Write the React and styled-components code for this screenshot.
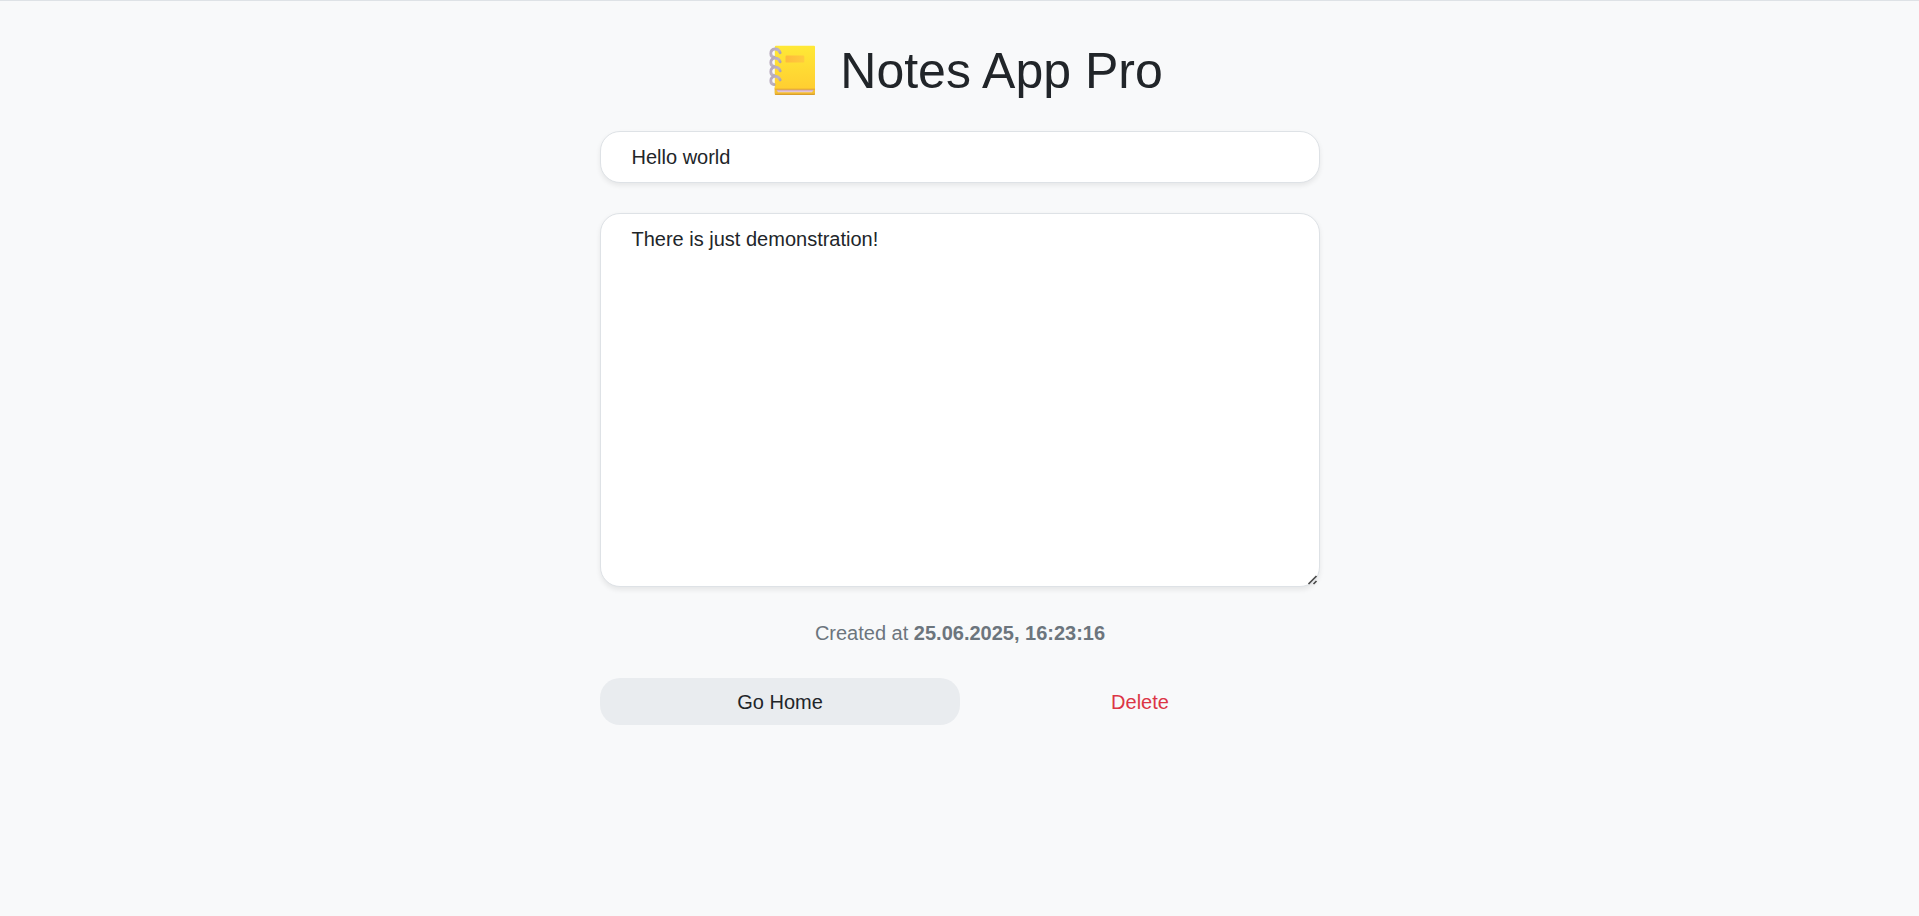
import React from 'react';
import styled, { createGlobalStyle } from 'styled-components';

const Global = createGlobalStyle`
  *, *::before, *::after { box-sizing: border-box; }
  body {
    margin: 0;
    background: #f8f9fa;
    color: #212529;
    font-family: "Liberation Sans", Arial, sans-serif;
    font-size: 20px;
    line-height: 1.5;
  }
`;
const Page = styled.main`
  border-top: 1px solid #dee2e6;
  display: flex;
  flex-direction: column;
  align-items: center;
  padding-top: 30px;
`;
const Heading = styled.header`
  display: flex;
  align-items: center;
  gap: 19px;
  height: 80px;
  padding-right: 3px;
`;
const NotebookSvg = styled.svg`
  display: block;
  width: 68px;
  height: 68px;
`;
const Title = styled.h1`
  margin: 0;
  font-size: 50px;
  font-weight: 400;
  line-height: 60px;
`;
const Column = styled.div`
  width: 720px;
  display: flex;
  flex-direction: column;
  padding-top: 20px;
`;
const Field = styled.input`
  display: block;
  width: 100%;
  height: 52px;
  padding: 10px 30px 10px 31px;
  border: 1px solid #dee2e6;
  border-radius: 20px;
  background: #fff;
  color: inherit;
  font: inherit;
  outline: 0;
  box-shadow: 0 2.5px 5px rgba(0, 0, 0, 0.075);
`;
const BodyWrap = styled.div`
  position: relative;
  margin-top: 30px;
`;
const Body = styled(Field)`
  height: 374px;
  resize: none;
`;
const Grip = styled.svg`
  position: absolute;
  right: 2px;
  bottom: 1px;
  width: 11px;
  height: 11px;
`;
const Created = styled.p`
  margin: 31px 0 30px;
  padding-left: 1px;
  color: #6c757d;
  text-align: center;
`;
const Actions = styled.div`
  display: flex;
`;
const Button = styled.button`
  flex: 1;
  height: 47px;
  padding: 0 0 0 1px;
  border: 0;
  border-radius: 20px;
  font: inherit;
  background: ${(p) => (p.$danger ? 'transparent' : '#e9ecef')};
  color: ${(p) => (p.$danger ? '#dc3545' : '#212529')};
`;

const RING_OFFSETS = [0, 9.1, 18.2, 27.3];

function Notebook() {
  return (
    <NotebookSvg viewBox="0 0 68 68" aria-hidden="true">
      <defs>
        <linearGradient id="cover" x1="0" y1="0" x2="0" y2="1">
          <stop offset="0" stopColor="#ffe936" />
          <stop offset="1" stopColor="#ffce31" />
        </linearGradient>
        <linearGradient id="label" x1="0" y1="0" x2="1" y2="0">
          <stop offset="0" stopColor="#ffba3c" />
          <stop offset="1" stopColor="#ffcb3d" />
        </linearGradient>
        <linearGradient id="ring" x1="0" y1="0" x2="1" y2="1">
          <stop offset="0" stopColor="#b5a8bd" />
          <stop offset="0.5" stopColor="#beb3c3" />
          <stop offset="1" stopColor="#a2949c" />
        </linearGradient>
        <linearGradient id="pages" x1="0" y1="0" x2="0" y2="1">
          <stop offset="0" stopColor="#c9a0b4" />
          <stop offset="1" stopColor="#ecd3e2" />
        </linearGradient>
      </defs>
      <rect x="21.8" y="50" width="40.2" height="8" rx="0.8" fill="#d99f2c" />
      <rect x="21.8" y="50" width="40.2" height="6.8" rx="0.8" fill="#f5c033" />
      <path d="M23.2 52.6H61L59 55.2H25Z" fill="url(#pages)" />
      <path d="M23 8.7H61a1 1 0 0 1 1 1V52H21.8V9.9Q21.8 8.7 23 8.7Z" fill="url(#cover)" />
      <rect x="21.8" y="51.7" width="40.2" height="0.8" fill="#e3a22b" />
      <rect x="32.5" y="18.6" width="18.8" height="7" rx="1.2" fill="url(#label)" />
      {RING_OFFSETS.map((y) => (
        <path
          key={y}
          transform={`translate(0 ${y})`}
          d="M27.2 15.7C26.3 12.9 24.3 11.9 22 12C19.2 12.2 17.8 14.2 17.8 16.5C17.8 18.5 19 20.1 21.2 20.2"
          fill="none"
          stroke="url(#ring)"
          strokeWidth="2.8"
          strokeLinecap="round"
        />
      ))}
    </NotebookSvg>
  );
}

export default function App() {
  return (
    <Page>
      <Global />
      <Heading>
        <Notebook />
        <Title>Notes App Pro</Title>
      </Heading>
      <Column>
        <Field defaultValue="Hello world" />
        <BodyWrap>
          <Body as="textarea" defaultValue="There is just demonstration!" />
          <Grip viewBox="0 0 11 11" aria-hidden="true">
            <path d="M1.5 9L9.5 1M6.5 9L9.5 6" stroke="#4a4a4a" strokeWidth="1.7" fill="none" />
          </Grip>
        </BodyWrap>
        <Created>Created at <b>25.06.2025, 16:23:16</b></Created>
        <Actions>
          <Button>Go Home</Button>
          <Button $danger>Delete</Button>
        </Actions>
      </Column>
    </Page>
  );
}
